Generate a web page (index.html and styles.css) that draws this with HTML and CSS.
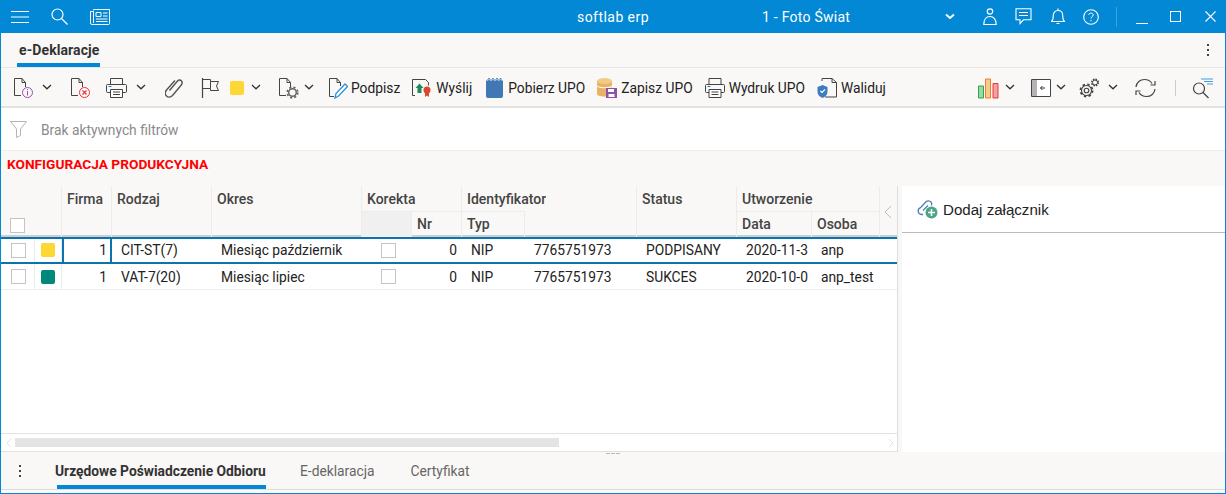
FILE: index.html
```html
<!DOCTYPE html>
<html lang="pl">
<head>
<meta charset="utf-8">
<title>softlab erp</title>
<link rel="stylesheet" href="styles.css">
</head>
<body>
<div class="app">
  <header class="titlebar">
    <div class="tb-left">
      <svg class="i-menu" width="18" height="12" viewBox="0 0 18 12"><path d="M0 .5h18M0 6h18M0 11.500h18" stroke="#fff" fill="none"/></svg>
      <svg class="i-search" width="17" height="17" viewBox="0 0 17 17"><circle cx="6.500" cy="6.500" r="5.500" stroke="#fff" fill="none" stroke-width="1.200"/><path d="M10.500 10.500l6 6" stroke="#fff" stroke-width="1.200"/></svg>
      <svg class="i-news" width="20" height="16" viewBox="0 0 20 16"><path d="M3.500 1.500V.5h16v14a1 1 0 0 1-1 1H2a1.500 1.500 0 0 1-1.500-1.500V2.500h3v11.500" stroke="#fff" fill="none"/><path d="M6 3.500h5v4H6z" stroke="#fff" fill="none"/><path d="M13 4h4.500M13 7h4.500M6 10h11.500M6 12.500h11.500" stroke="#fff"/></svg>
    </div>
    <div class="tb-app">softlab erp</div>
    <div class="tb-company">1 - Foto Świat</div>
    <svg class="i-caret" width="10" height="7" viewBox="0 0 10 7"><path d="M1 1.500l4 3.500 4-3.500" stroke="#fff" stroke-width="2" fill="none"/></svg>
    <svg class="i-user" width="14" height="18" viewBox="0 0 14 18"><circle cx="7" cy="3.500" r="2.700" stroke="#fff" fill="none" stroke-width="1.200"/><path d="M.8 16.500c0-5 2.500-8 6.200-8s6.200 3 6.200 8z" stroke="#fff" fill="none" stroke-width="1.200"/></svg>
    <svg class="i-chat" width="17" height="17" viewBox="0 0 17 17"><path d="M1 .8h15v11H8.500L5 15.500v-3.700H1z" stroke="#fff" fill="none" stroke-width="1.100"/><path d="M4 4.500h9M4 7.500h9" stroke="#fff"/></svg>
    <svg class="i-bell" width="14" height="17" viewBox="0 0 14 17"><path d="M.5 13.500c1.800-1.500 1.800-3 1.800-6 0-3 2-5 4.700-5s4.700 2 4.700 5c0 3 0 4.500 1.800 6z" stroke="#fff" fill="none" stroke-width="1.100"/><path d="M7 .5v2M5.500 15.500h3" stroke="#fff" stroke-width="1.200"/></svg>
    <svg class="i-help" width="16" height="16" viewBox="0 0 16 16"><circle cx="8" cy="8" r="7.300" stroke="#fff" fill="none" stroke-width="1.100"/><path d="M5.800 6c0-1.300 1-2 2.200-2s2.200.8 2.200 2c0 1.700-2.200 1.700-2.200 3.500" stroke="#fff" fill="none"/><path d="M8 11v1.300" stroke="#fff"/></svg>
    <div class="tb-sep"></div>
    <div class="tb-min"></div>
    <div class="tb-max"></div>
    <svg class="i-close" width="11" height="11" viewBox="0 0 11 11"><path d="M.5.500l10 10M10.500.500l-10 10" stroke="#fff" stroke-width="1.100"/></svg>
  </header>

  <nav class="tabbar">
    <div class="module-tab">e-Deklaracje</div>
    <div class="kebab"><span></span><span></span><span></span></div>
  </nav>

  <div class="toolbar">
    <svg class="icon ml-12" width="21" height="21" viewBox="0 0 21 21"><path d="M1.500 17.500V.5H9l3.500 4V9M9 .5v4h3.500M1.500 17.500H8" stroke="#444" fill="none"/><circle cx="14.500" cy="14.500" r="5" stroke="#9b4fb3" fill="none"/><path d="M14.500 13v4.500M14.500 11v1" stroke="#9b4fb3"/></svg>
    <svg class="chev ml-8" width="10" height="6" viewBox="0 0 10 6"><path d="M1 1l4 3.800L9 1" stroke="#333" stroke-width="1.300" fill="none"/></svg>
    <svg class="icon ml-18" width="21" height="21" viewBox="0 0 21 21"><path d="M1.500 17.500V.5H9l3.500 4V9M9 .5v4h3.500M1.500 17.500H8" stroke="#444" fill="none"/><circle cx="14.500" cy="14.500" r="5" stroke="#e33" fill="none"/><path d="M12.500 12.500l4 4M16.500 12.500l-4 4" stroke="#e33" stroke-width="1.200"/></svg>
    <svg class="icon ml-15" width="21" height="21" viewBox="0 0 21 21"><path d="M4.500 6.500V.5h12v6M4.500 14.500h-3a1 1 0 0 1-1-1v-6a1 1 0 0 1 1-1h18a1 1 0 0 1 1 1v6a1 1 0 0 1-1 1h-3" stroke="#444" fill="none"/><path d="M4.500 11.500h12v8h-12z" stroke="#444" fill="#fff"/><path d="M7 14h7M7 16.500h7" stroke="#444"/><path d="M2.500 8.500h3" stroke="#1a86d0"/></svg>
    <svg class="chev ml-9" width="10" height="6" viewBox="0 0 10 6"><path d="M1 1l4 3.800L9 1" stroke="#333" stroke-width="1.300" fill="none"/></svg>
    <svg class="icon ml-19" width="20" height="21" viewBox="0 0 20 21"><path d="M5.500 13.500l8-9.500c1.200-1.400 3-1.300 4 0 1 1.200.8 2.700-.2 4L8.500 18.500c-1.900 2.100-4.500 2-6 .5s-1.700-3.800 0-6L11 3.500" stroke="#555" fill="none" stroke-width="1.400" transform="translate(-1 -1)"/></svg>
    <svg class="icon ml-16" width="19" height="20" viewBox="0 0 19 20"><path d="M1.500 0v20" stroke="#444" stroke-width="1.200"/><path d="M1.500 1.500h8v2h8l-2 4.500 2 4.500h-8v-2h-8M9.500 3.500v7" stroke="#444" fill="none"/></svg>
    <div class="swatch swatch-y ml-10"></div>
    <svg class="chev ml-7" width="10" height="6" viewBox="0 0 10 6"><path d="M1 1l4 3.800L9 1" stroke="#333" stroke-width="1.300" fill="none"/></svg>
    <svg class="icon ml-17" width="21" height="21" viewBox="0 0 21 21"><path d="M1.500 17.500V.5H9l3.500 4V9M9 .5v4h3.500M1.500 17.500H8" stroke="#444" fill="none"/><circle cx="14.500" cy="14.500" r="3.800" stroke="#666" fill="none" stroke-width="1.500"/><circle cx="14.500" cy="14.500" r="5.300" stroke="#666" fill="none" stroke-width="1.700" stroke-dasharray="2.200 2"/></svg>
    <svg class="chev ml-5" width="10" height="6" viewBox="0 0 10 6"><path d="M1 1l4 3.800L9 1" stroke="#333" stroke-width="1.300" fill="none"/></svg>
    <svg class="icon ml-14" width="20" height="21" viewBox="0 0 20 21"><path d="M1.500 18.500V.5H9l3.500 4V8M9 .5v4h3.500M1.500 18.500H6" stroke="#444" fill="none"/><path d="M7 20l1-4.500L17 6l2.500 2.500L10.500 18z" stroke="#2f8fd8" stroke-width="1.300" fill="#fff"/></svg>
    <span class="tool-text ml-3">Podpisz</span>
    <svg class="icon ml-12" width="20" height="20" viewBox="0 0 20 20"><path d="M3 17.500H.5V1.500h13l3 3v3" stroke="#444" fill="none"/><path d="M3.500 10l4-4.500 4 4.500H9.500v5h-4v-5z" fill="#1d8a57"/><circle cx="15" cy="12" r="3.500" fill="#d9472f"/><path d="M13 14.500V19l2-1.500 2 1.500v-4.500z" fill="#d9472f"/></svg>
    <span class="tool-text ml-4">Wyślij</span>
    <svg class="icon ml-14" width="17" height="20" viewBox="0 0 17 20"><path d="M0 2.500h17V18a2 2 0 0 1-2 2H2a2 2 0 0 1-2-2z" fill="#4277b5"/><path d="M3 0v4M7 0v4M11 0v4M14.500 0v4" stroke="#4277b5" stroke-width="1.500"/><path d="M1 1.500h15" stroke="#9db9d8"/></svg>
    <span class="tool-text ml-5">Pobierz UPO</span>
    <svg class="icon ml-12" width="20" height="20" viewBox="0 0 20 20"><path d="M0 3v13c0 1.500 3 2.500 7 2.500h4V9.500h4V3z" fill="#e9b264"/><ellipse cx="7.500" cy="3" rx="7.500" ry="3" fill="#f2c987"/><path d="M0 8c2 2.300 13 2.300 15 0" stroke="#fff" fill="none"/><path d="M9 10h11v10H9z" fill="#8a52a8"/><path d="M11 11h6v3h-6zM11.500 16h6v3h-6z" fill="#fff"/></svg>
    <span class="tool-text ml-4">Zapisz UPO</span>
    <svg class="icon ml-12" width="20" height="20" viewBox="0 0 20 20"><path d="M4 6.500V.5h12v6M4 14.500H1.500a1 1 0 0 1-1-1v-6a1 1 0 0 1 1-1h17a1 1 0 0 1 1 1v6a1 1 0 0 1-1 1H16" stroke="#444" fill="none"/><path d="M4 11.500h12v8H4z" stroke="#444" fill="#fff"/><path d="M6.500 14h7M6.500 16.500h7" stroke="#444"/><path d="M2.500 8.500h3" stroke="#1a86d0"/></svg>
    <span class="tool-text ml-4">Wydruk UPO</span>
    <svg class="icon ml-12" width="20" height="20" viewBox="0 0 20 20"><path d="M5 3V.5h10l4.500 4v14.500H8M15 .5v4h4.500" stroke="#444" fill="none"/><path d="M.5 9l5-2 5 2v5c0 3-2.500 5-5 6-2.500-1-5-3-5-6z" fill="#3d7cc0"/><path d="M3.500 13l1.500 1.500 3-3" stroke="#fff" stroke-width="1.200" fill="none"/></svg>
    <span class="tool-text ml-4">Waliduj</span>

    <svg class="icon push" width="21" height="21" viewBox="0 0 21 21"><path d="M.5 8h5v12h-5z" stroke="#27a84a" fill="#9ad8a8"/><path d="M7.500 1h5v19h-5z" stroke="#ef7f2d" fill="#f9c98d"/><path d="M15 5.500h5V20h-5z" stroke="#e33b3b" fill="#f3a0a0"/></svg>
    <svg class="chev ml-6" width="10" height="6" viewBox="0 0 10 6"><path d="M1 1l4 3.800L9 1" stroke="#333" stroke-width="1.300" fill="none"/></svg>
    <svg class="icon ml-16" width="20" height="18" viewBox="0 0 20 18"><path d="M.5.500h19v17H.5z" stroke="#444" fill="#fff"/><path d="M1 1h5v16H1z" fill="#b4b4b4"/><path d="M14 9H9.500M11.500 7L9.500 9l2 2" stroke="#333" fill="none"/></svg>
    <svg class="chev ml-5" width="10" height="6" viewBox="0 0 10 6"><path d="M1 1l4 3.800L9 1" stroke="#333" stroke-width="1.300" fill="none"/></svg>
    <svg class="icon ml-13" width="21" height="20" viewBox="0 0 21 20"><circle cx="7.500" cy="12.500" r="2.300" stroke="#444" fill="none" stroke-width="1.100"/><circle cx="7.500" cy="12.500" r="5" stroke="#444" fill="none" stroke-width="1.100"/><circle cx="7.500" cy="12.500" r="6.100" stroke="#444" fill="none" stroke-width="1.700" stroke-dasharray="2.400 2.400"/><circle cx="16" cy="4.500" r="2.500" stroke="#444" fill="none" stroke-width="1"/><circle cx="16" cy="4.500" r="3.300" stroke="#444" fill="none" stroke-width="1.500" stroke-dasharray="1.500 1.100"/></svg>
    <svg class="chev ml-8" width="10" height="6" viewBox="0 0 10 6"><path d="M1 1l4 3.800L9 1" stroke="#333" stroke-width="1.300" fill="none"/></svg>
    <svg class="icon ml-17" width="21" height="20" viewBox="0 0 21 20"><path d="M1 9c.5-4.500 4-7.500 8.500-7.500 3.500 0 6 1.500 7.500 4M20 3v4h-4.500" stroke="#444" fill="none" stroke-width="1.200"/><path d="M20 11c-.5 4.500-4 7.500-8.500 7.500-3.500 0-6-1.500-7.500-4M1 17v-4h4.500" stroke="#444" fill="none" stroke-width="1.200"/></svg>
    <div class="tool-sep"></div>
    <svg class="icon ml-16 mr-12" width="21" height="21" viewBox="0 0 21 21"><circle cx="7" cy="10.500" r="5.500" stroke="#444" fill="none" stroke-width="1.200"/><path d="M11 14.500l5.500 5.500" stroke="#444" stroke-width="1.300"/><path d="M9 1h12M12 3.500h9M15 6h6" stroke="#3f9fe0"/></svg>
  </div>

  <div class="filterbar">
    <svg class="i-funnel" width="17" height="17" viewBox="0 0 17 17"><path d="M.5.500h16L10.500 8v6.500l-4 2V8z" stroke="#b5b5b5" fill="none"/></svg>
    <span class="filter-text">Brak aktywnych filtrów</span>
  </div>

  <div class="configbar">KONFIGURACJA PRODUKCYJNA</div>
  <div class="spacer"></div>

  <div class="content">
    <section class="grid-pane">
      <div class="grid-scroll">
        <div class="grid-head">
          <div class="hc hc-check"><span class="checkbox"></span></div>
          <div class="hc hc-firma">Firma</div>
          <div class="hc hc-rodzaj">Rodzaj</div>
          <div class="hc hc-okres">Okres</div>
          <div class="hc hc-korekta">Korekta</div>
          <div class="hc hc-ident"><span class="clip">Identyfikator</span></div>
          <div class="hc hc-status">Status</div>
          <div class="hc hc-utw">Utworzenie</div>
          <div class="hc2 hc-kor1"></div>
          <div class="hc2 hc-nr">Nr</div>
          <div class="hc2 hc-typ">Typ</div>
          <div class="hc2 hc-num"></div>
          <div class="hc2 hc-data">Data</div>
          <div class="hc2 hc-osoba">Osoba</div>
          <div class="hc-arrow"><svg width="8" height="14" viewBox="0 0 8 14"><path d="M7 1L1 7l6 6" stroke="#bbb" fill="none"/></svg></div>
        </div>
        <div class="grid-row selected">
          <div class="c c-check"><span class="checkbox"></span></div>
          <div class="c c-color"><span class="swatch swatch-y"></span></div>
          <div class="c c-firma focus">1</div>
          <div class="c">CIT-ST(7)</div>
          <div class="c">Miesiąc październik</div>
          <div class="c c-box"><span class="checkbox"></span></div>
          <div class="c c-right">0</div>
          <div class="c">NIP</div>
          <div class="c">7765751973</div>
          <div class="c">PODPISANY</div>
          <div class="c">2020-11-3</div>
          <div class="c">anp</div>
        </div>
        <div class="grid-row plain">
          <div class="c c-check"><span class="checkbox"></span></div>
          <div class="c c-color"><span class="swatch swatch-g"></span></div>
          <div class="c c-firma">1</div>
          <div class="c">VAT-7(20)</div>
          <div class="c">Miesiąc lipiec</div>
          <div class="c c-box"><span class="checkbox"></span></div>
          <div class="c c-right">0</div>
          <div class="c">NIP</div>
          <div class="c">7765751973</div>
          <div class="c">SUKCES</div>
          <div class="c">2020-10-0</div>
          <div class="c">anp_test</div>
        </div>
      </div>
      <div class="hscroll">
        <svg width="6" height="10" viewBox="0 0 6 10"><path d="M5 1L1 5l4 4" stroke="#e2e2e2" fill="none"/></svg>
        <div class="hthumb-track"><div class="hthumb"></div></div>
        <svg width="6" height="10" viewBox="0 0 6 10"><path d="M1 1l4 4-4 4" stroke="#e2e2e2" fill="none"/></svg>
      </div>
    </section>
    <div class="divider"></div>
    <aside class="side">
      <div class="side-head">
        <svg width="21" height="19" viewBox="0 0 21 19"><path d="M6 14.500H4.500a3.500 3.500 0 0 1-1-6.800L9 1.800a3.500 3.500 0 0 1 5 .2 3.500 3.500 0 0 1 .5 3.500" stroke="#4a7fb5" fill="none" stroke-width="1.300"/><path d="M6 10.500l5-5" stroke="#4a7fb5" stroke-width="1.300"/><circle cx="14.500" cy="12.500" r="6" fill="#4aa586"/><path d="M14.500 9v7M11 12.500h7" stroke="#fff" stroke-width="1.600"/></svg>
        <span class="side-text">Dodaj załącznik</span>
      </div>
    </aside>
  </div>

  <footer class="bottombar">
    <div class="grip"><span></span><span></span><span></span></div>
    <div class="kebab kebab-b"><span></span><span></span><span></span></div>
    <div class="btab active">Urzędowe Poświadczenie Odbioru</div>
    <div class="btab btab-e">E-deklaracja</div>
    <div class="btab btab-c">Certyfikat</div>
  </footer>
  <div class="bottom-gap"></div>
</div>
</body>
</html>
```
FILE: styles.css
```css
* { box-sizing: border-box; }
html, body { margin: 0; height: 100%; }
body { font-family: Roboto, "Liberation Sans", sans-serif; font-size: 14px; color: #222; overflow: hidden; }
svg { display: block; flex: none; }

.app { width: 1226px; height: 494px; display: flex; flex-direction: column; border: solid #0288d4; border-width: 0 1px 1px; background: #fff; }

.titlebar { height: 33px; margin: 0 -1px; background: #0288d4; color: #fff; display: flex; align-items: center; flex: none; position: relative; }
.tb-left { display: flex; align-items: center; width: 530px; padding-left: 11px; flex: none; }
.i-search { margin-left: 22px; }
.i-news { margin-left: 22px; }
.tb-app { width: 166px; flex: none; text-align: center; font-size: 14px; letter-spacing: .45px; }
.tb-company { width: 229px; flex: none; padding-left: 66px; font-size: 14px; letter-spacing: .25px; }
.tb-app, .tb-company { white-space: nowrap; }
.i-caret { margin-left: 20px; }
.i-user { margin-left: 28px; }
.i-chat { margin-left: 18px; }
.i-bell { margin-left: 19px; }
.i-help { margin-left: 18px; }
.tb-sep { width: 1px; height: 20px; background: #3aa3e0; margin-left: 17px; flex: none; }
.tb-min { width: 12px; height: 1px; background: #fff; margin: 5px 0 0 19px; transform: translateY(4px); flex: none; }
.tb-max { width: 11px; height: 11px; border: 1px solid #fff; margin-left: 22px; flex: none; }
.i-close { margin-left: 24px; }

.tabbar { height: 35px; background: #f9f8f6; flex: none; display: flex; justify-content: space-between; align-items: flex-end; border-bottom: 1px solid #e8e8e8; padding-left: 16px; }
.module-tab { height: 34px; width: 83px; border-bottom: 4px solid #0288d4; font-weight: 700; font-size: 14px; letter-spacing: .1px; color: #333; padding: 9px 0 0 2px; white-space: nowrap; }
.kebab { display: flex; flex-direction: column; gap: 3px; align-self: center; margin-right: 16px; }
.kebab span { width: 2px; height: 2px; background: #444; display: block; }

.toolbar { height: 40px; padding-top: 2px; background: #f9f8f6; border-bottom: 2px solid #e2e2e2; display: flex; align-items: center; flex: none; }
.tool-text { font-size: 13.800px; color: #222; white-space: nowrap; flex: none; }
.chev { margin-top: -2px; }
.push { margin-left: auto; }
.tool-sep { width: 1px; height: 16px; background: #ccc; margin-left: 19px; flex: none; }
.ml-3 { margin-left: 3px; } .ml-4 { margin-left: 4px; } .ml-5 { margin-left: 5px; } .ml-6 { margin-left: 6px; } .ml-7 { margin-left: 7px; } .ml-8 { margin-left: 8px; } .ml-9 { margin-left: 9px; }
.ml-10 { margin-left: 10px; } .ml-12 { margin-left: 12px; } .ml-13 { margin-left: 13px; } .ml-14 { margin-left: 14px; } .ml-15 { margin-left: 15px; } .ml-16 { margin-left: 16px; }
.ml-17 { margin-left: 17px; } .ml-18 { margin-left: 18px; } .ml-19 { margin-left: 19px; } .mr-12 { margin-right: 12px; }

.swatch { width: 14px; height: 14px; border-radius: 2px; display: block; flex: none; }
.swatch-y { background: #fdd835; }
.swatch-g { background: #00897b; }

.filterbar { height: 42px; padding-top: 1px; background: #fff; display: flex; align-items: center; padding-left: 9px; flex: none; }
.filter-text { margin-left: 14px; color: #8a8a8a; font-size: 13.800px; }

.configbar { height: 30px; background: #f9f8f6; border-top: 1px solid #eee; color: #f00; font-weight: 700; font-size: 13.700px; padding: 5px 0 0 6px; flex: none; white-space: nowrap; }
.spacer { height: 6px; background: #f9f8f6; flex: none; }

.content { height: 266px; display: flex; flex: none; }
.grid-pane { width: 896px; display: flex; flex-direction: column; flex: none; }
.grid-scroll { flex: 1; background: #fff; border-bottom: 1px solid #e2e2e2; }
.grid-head { height: 51px; background: #f9f8f6; display: grid; grid-template-columns: 34px 27px 50px 100px 150px 50px 50px 63px 112px 100px 75px 68px 16px; grid-template-rows: 25px 26px; color: #444; font-size: 14px; font-weight: 500; border-bottom: 2px solid #c8d0d6; }
.hc, .hc2 { border-right: 1px solid #ececec; padding: 5px 0 0 5px; white-space: nowrap; overflow: hidden; }
.hc-check { grid-column: 1 / 3; grid-row: 1 / 3; padding: 32px 0 0 9px; }
.hc-firma { grid-column: 3; grid-row: 1 / 3; }
.hc-rodzaj { grid-column: 4; grid-row: 1 / 3; }
.hc-okres { grid-column: 5; grid-row: 1 / 3; }
.hc-korekta { grid-column: 6 / 8; grid-row: 1; }
.hc-ident { grid-column: 8 / 10; grid-row: 1; }
.hc-status { grid-column: 10; grid-row: 1 / 3; }
.hc-utw { grid-column: 11 / 13; grid-row: 1; }
.clip { display: block; width: 79px; overflow: hidden; }
.hc2 { border-top: 1px solid #ececec; padding-top: 4px; }
.hc-kor1 { grid-column: 6; grid-row: 2; background: #f0f0f0; }
.hc-nr { grid-column: 7; grid-row: 2; }
.hc-typ { grid-column: 8; grid-row: 2; }
.hc-num { grid-column: 9; grid-row: 2; border-top: 0; }
.hc-data { grid-column: 11; grid-row: 2; }
.hc-osoba { grid-column: 12; grid-row: 2; }
.hc-arrow { grid-column: 13; grid-row: 1 / 3; display: flex; align-items: center; justify-content: center; }

.grid-row { display: grid; grid-template-columns: 34px 27px 50px 100px 150px 50px 50px 63px 112px 100px 75px 84px; align-items: center; color: #222; font-size: 13.800px; }
.selected { height: 27px; border-top: 2px solid #0b74ad; border-bottom: 2px solid #0b74ad; }
.selected .c { padding-bottom: 1px; }
.plain { height: 26px; border-bottom: 1px solid #eee; }
.c { height: 100%; display: flex; align-items: center; padding-left: 9px; white-space: nowrap; overflow: hidden; }
.c-check, .c-color { border-right: 1px solid #ececec; }
.c-check { padding-left: 10px; }
.c-color { padding-left: 6px; }
.c-firma { justify-content: flex-end; padding: 0 5px 0 0; }
.focus { border: solid #0b74ad; border-width: 0 2px; padding-right: 3px; }
.c-box { padding-left: 19px; }
.c-right { justify-content: flex-end; padding: 0 5px 0 0; }
.checkbox { width: 15px; height: 15px; border: 1px solid #c4c4c4; background: #fff; display: block; flex: none; }

.hscroll { height: 18px; background: #fff; display: flex; align-items: center; padding: 0 3px 0 5px; border-bottom: 1px solid #e2e2e2; flex: none; }
.hthumb-track { flex: 1; margin: 0 3px; }
.hthumb { width: 544px; height: 9px; background: #e4e4e4; }

.divider { width: 5px; background: #f8f8f8; border-left: 1px solid #ddd; flex: none; }
.side { flex: 1; background: #fff; }
.side-head { height: 47px; border-bottom: 1px solid #bbb; display: flex; align-items: center; padding-left: 15px; }
.side-text { font-family: "Liberation Sans", Arial, sans-serif; font-size: 15.100px; color: #222; margin-left: 5px; }

.bottombar { height: 38px; flex: none; background: #f9f8f6; border-bottom: 1px solid #dcdcdc; display: flex; align-items: stretch; position: relative; }
.bottom-gap { height: 3px; background: #fbfaf8; flex: none; }
.grip { position: absolute; left: 605px; top: 1px; display: flex; gap: 1px; }
.grip span { width: 4px; height: 1px; background: #bbb; display: block; }
.kebab-b { margin: 0 0 0 18px; align-self: center; }
.btab { padding-top: 11px; color: #666; font-size: 13.800px; white-space: nowrap; }
.btab.active { margin-left: 36px; text-indent: -2px; color: #333; font-weight: 700; border-bottom: 4px solid #0288d4; width: 209px; }
.btab-e { margin-left: 34px; }
.btab-c { margin-left: 36px; }
```
